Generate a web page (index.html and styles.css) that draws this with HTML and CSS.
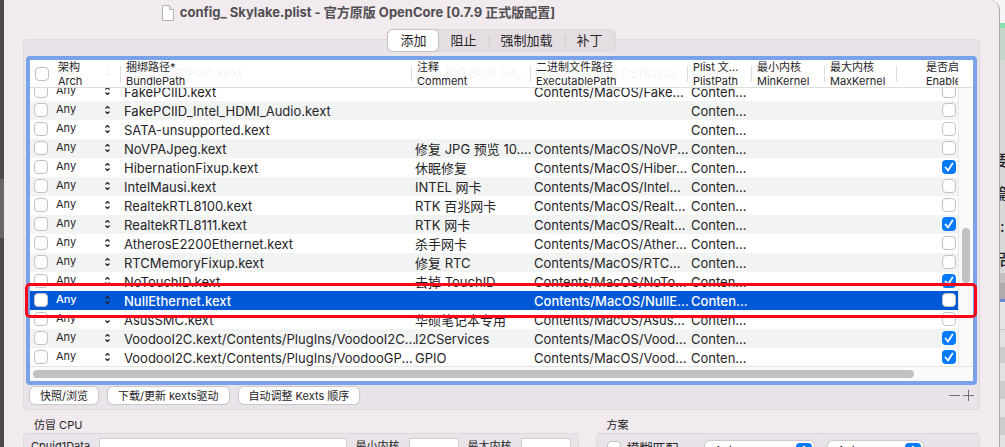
FILE: index.html
```
<!DOCTYPE html>
<html lang="zh-CN">
<head>
<meta charset="utf-8">
<title>config_ Skylake.plist</title>
<link rel="stylesheet" href="styles.css">
</head>
<body>
<div class="desktop">
  <div class="edge-left"></div>
  <main class="window">
    <header class="titlebar">
      <svg class="doc-icon" viewBox="0 0 12 16" width="12" height="16"><path d="M.5.5h7l4 4v11H.5z" fill="#fff" stroke="#b5b1b5"/><path d="M7.500.5v4h4" fill="#eee" stroke="#b5b1b5"/></svg>
      <h1>config_ Skylake.plist - 官方原版 OpenCore [0.7.9 正式版配置]</h1>
    </header>
    <section class="panel">
      <nav class="tabs">
        <button class="tab active">添加</button><button class="tab">阻止</button><button class="tab divided">强制加载</button><button class="tab divided">补丁</button>
      </nav>
      <div class="table-frame">
        <div class="scroller">
          <table class="kexts">
            <thead><tr>
              <th><input type="checkbox" aria-label="全选"></th>
              <th>架构<br>Arch</th><th>捆绑路径*<br>BundlePath</th><th>注释<br>Comment</th><th>二进制文件路径<br>ExecutablePath</th><th>Plist 文...<br>PlistPath</th><th>最小内核<br>MinKernel</th><th>最大内核<br>MaxKernel</th><th class="enabled">是否启<br>Enable</th>
            </tr></thead>
            <tbody id="rows"></tbody>
          </table>
          <div class="vtrack"><div class="vthumb"></div></div>
        </div>
        <div class="htrack"><div class="hthumb"></div></div>
        <div class="highlight"></div>
      </div>
      <div class="actions">
        <button class="push">快照/浏览</button><button class="push">下载/更新 kexts驱动</button><button class="push">自动调整 Kexts 顺序</button>
        <span class="spacer"></span>
        <button class="icon-button" aria-label="删除"><svg width="11" height="11" viewBox="0 0 11 11"><path d="M0 5.500h11" stroke="#716d72"/></svg></button>
        <button class="icon-button" aria-label="增加"><svg width="11" height="11" viewBox="0 0 11 11"><path d="M0 5.500h11M5.500 0v11" stroke="#716d72"/></svg></button>
      </div>
    </section>
    <div class="groups">
      <section class="group cpu">
        <h2>仿冒 CPU</h2>
        <div class="group-box">
          <label for="cpuid">Cpuid1Data</label><input class="grow" id="cpuid" type="text">
          <label for="min">最小内核</label><input class="short" id="min" type="text">
          <label for="max">最大内核</label><input class="short" id="max" type="text">
        </div>
      </section>
      <section class="group scheme">
        <h2>方案</h2>
        <div class="group-box">
          <input type="checkbox" id="fuzzy"><label for="fuzzy">模糊匹配</label>
          <span class="popup wide"><select aria-label="架构"><option>Auto</option></select><svg width="16" height="16" viewBox="0 0 16 16"><rect width="16" height="16" rx="4" fill="#067aff"/><path d="M5 6.500l3-3 3 3M5 9.500l3 3 3-3" fill="none" stroke="#fff" stroke-width="1.500"/></svg></span>
          <span class="popup"><select aria-label="缓存"><option>Auto</option></select><svg width="16" height="16" viewBox="0 0 16 16"><rect width="16" height="16" rx="4" fill="#067aff"/><path d="M5 6.500l3-3 3 3M5 9.500l3 3 3-3" fill="none" stroke="#fff" stroke-width="1.500"/></svg></span>
        </div>
      </section>
    </div>
  </main>
  <aside class="behind"><span>要</span><span>篇</span><span class="colon">:</span><span>品</span></aside>
</div>
<script src="rows.js"></script>
</body>
</html>
```
FILE: styles.css
```
* { box-sizing: border-box; }
body { margin: 0; height: 100vh; overflow: hidden; font: 13px/19px Inter, "Noto Sans CJK SC", sans-serif; color: #262427; background: #d6d6d6; }
button, input, select { font: inherit; color: inherit; margin: 0; }
.desktop { display: grid; grid-template-columns: 4px minmax(0, 1fr) 5px; height: 100vh; overflow: hidden; background: linear-gradient(#f5f5f5 23px, #86deaa 23px 28px, #c4d5ca 28px 60px, #d8d8d8 60px 273px, #c4bec0 273px 283px, #b0aaae 283px 299px, #6288d3 299px 302px, #e6e6e6 302px 329px, #c8c8c8 329px 330px, #e2e2e2 330px 347px, #cbcdcc 347px 363px, #e2e2e2 363px 381px, #cbcdcc 381px 399px, #e2e2e2 399px 417px, #cbcdcc 417px 435px, #e2e2e2 435px); }
.edge-left { background: linear-gradient(#4c484c 179px, #686467 179px 238px, #4c484c 238px); }
.window { background: #f1ebef; border-top-right-radius: 10px; border-right: 1px solid #aaa6aa; padding: 0 19px; min-width: 0; }
.titlebar { display: flex; justify-content: center; align-items: center; gap: 6px; height: 39px; padding: 0 286px 14px 0; }
h1 { margin: 0; font-size: 13px; line-height: 19px; font-weight: 700; color: #514d51; white-space: nowrap; }
.panel { border: 1px solid #dfd9de; border-radius: 4px; background: #e9e4e9; padding: 0 2px 5px; }
.tabs { display: flex; width: max-content; margin: -11px auto 4px; position: relative; background: #e4dee3; border: 1px solid #ddd7dc; border-radius: 6px; height: 23px; }
.tab { border: 0; background: none; padding: 0 12px; line-height: 21px; position: relative; }
.tab.active { background: #fff; border-radius: 5px; box-shadow: 0 0 1px 1px #c6c0c5; }
.tab.divided::before { content: ""; position: absolute; left: 0; top: 5px; height: 11px; width: 1px; background: #cdc7cc; }
.table-frame { position: relative; border: 4px solid #78a2ea; border-radius: 4px; background: #fafafa; }
.scroller { position: relative; display: grid; grid-template-columns: minmax(0, 1fr) 15px; height: 307px; overflow: hidden; border-bottom: 1px solid #e4e4e4; background: #fff; }
.kexts { display: block; padding-top: 3px; }
.kexts tr { display: grid; grid-template-columns: 24px 66px minmax(0, 1fr) 119px 157px 64px 73px 72px 62px; }
.kexts thead { position: absolute; top: 0; left: 0; right: 0; z-index: 1; background: rgba(255, 255, 255, .95); border-bottom: 1px solid #dddddd; height: 28px; display: block; padding-right: 15px; }
.kexts tbody { display: block; }
th { position: relative; padding: 0 0 0 6px; height: 27px; text-align: left; font-weight: 400; font-size: 11px; line-height: 14px; white-space: nowrap; }
th:nth-child(n+3)::before { content: ""; position: absolute; left: 0; top: 6px; height: 16px; width: 1px; background: #dddddd; }
th:first-child { padding: 7px 0 0 5px; }
th:nth-child(2) { padding-left: 4px; }
th.enabled { padding-left: 30px; overflow: hidden; }
td { padding: 0 0 0 4px; height: 19px; line-height: 21px; white-space: nowrap; }
td.arch { display: flex; justify-content: space-between; align-items: flex-start; padding: 0 10px 0 2px; font-size: 11px; line-height: 17px; }
td.arch svg { margin-top: 5px; color: #262427; }
td.enabled { padding: 2px 2px 0 0; text-align: right; line-height: 0; }
td.pick { padding-top: 2px; line-height: 0; }
tbody tr:nth-child(odd) { background: #f2f4f4; }
tbody tr.selected { background: #0058d6; color: #fff; font-weight: 500; }
input[type="checkbox"] { appearance: none; flex: none; width: 14px; height: 14px; border: 1px solid #c2c0c2; border-radius: 4px; background: #fff; display: inline-block; vertical-align: top; }
input[type="checkbox"]:checked { border: 0; background: #067aff url("data:image/svg+xml,%3Csvg xmlns='http://www.w3.org/2000/svg' viewBox='0 0 14 14'%3E%3Cpath d='M3.500 7.500l2.500 3 4.500-7' fill='none' stroke='white' stroke-width='1.800' stroke-linecap='round' stroke-linejoin='round'/%3E%3C/svg%3E"); }
.vtrack { background: #fafafa; border-left: 1px solid #e8e8e8; padding: 168px 3px 0; }
.vthumb { height: 55px; border-radius: 4px; background: #c1c1c1; }
.htrack { padding: 3px 59px 3px 3px; }
.hthumb { height: 8px; border-radius: 4px; background: #c1c1c1; }
.highlight { position: absolute; z-index: 2; left: -5px; right: -4px; top: 223px; height: 35px; border: 3px solid #fc0519; border-radius: 5px; }
.actions { display: flex; align-items: center; gap: 10px; padding: 2px 3px 0 4px; }
.push { border: 0; border-radius: 5px; background: #fff; box-shadow: 0 0 1px 1px #cbc5ca; height: 17px; padding: 0 10px; font-size: 11px; line-height: 16px; }
.spacer { flex: 1; }
.icon-button { border: 0; background: none; padding: 0; width: 11px; height: 11px; display: flex; }
.icon-button + .icon-button { margin-left: -7px; }
.groups { display: grid; grid-template-columns: minmax(0, 555fr) minmax(0, 384fr); gap: 17px; padding-top: 8px; }
h2 { margin: 0 0 0 11px; font-size: 11px; line-height: 15px; font-weight: 400; }
.group-box { display: flex; align-items: flex-start; border: 1px solid #dfd9de; border-radius: 4px; background: #e9e4e9; padding: 4px 7px; height: 60px; gap: 9px; }
.group-box label { font-size: 11px; line-height: 16px; white-space: nowrap; }
input[type="text"] { border: 1px solid #d2ccd1; background: #fff; height: 21px; padding: 0; min-width: 0; }
.grow { flex: 1; }
.short { width: 50px; }
.scheme .group-box { padding: 7px 10px; gap: 6px; }
.scheme label { font-size: 13px; line-height: 14px; }
.popup { position: relative; display: flex; width: 95px; margin-left: 8px; }
.popup.wide { width: 109px; margin-left: 20px; }
.popup select { appearance: none; border: 0; width: 100%; height: 19px; border-radius: 5px; padding: 0 10px; background: #fff; box-shadow: 0 0 1px 1px #cbc5ca; font-size: 11px; line-height: 17px; }
.popup svg { position: absolute; right: 2px; top: 2px; }
.behind { padding-top: 151px; overflow: hidden; font-size: 15px; font-weight: 500; }
.behind span { display: block; width: 15px; height: 33px; margin-left: -7px; }
.behind .colon { margin-left: 0; }
```
FILE: rows.js
```
const kexts = [
  ["CtlnaAHCIPort.kext", "修复 BIG SUR SA...", "Contents/MacOS/Ctlna...", 0],
  ["FakePCIID.kext", "", "Contents/MacOS/Fake...", 0],
  ["FakePCIID_Intel_HDMI_Audio.kext", "", "", 0],
  ["SATA-unsupported.kext", "", "", 0],
  ["NoVPAJpeg.kext", "修复 JPG 预览 10....", "Contents/MacOS/NoVP...", 0],
  ["HibernationFixup.kext", "休眠修复", "Contents/MacOS/Hiber...", 1],
  ["IntelMausi.kext", "INTEL 网卡", "Contents/MacOS/Intel...", 0],
  ["RealtekRTL8100.kext", "RTK 百兆网卡", "Contents/MacOS/Realt...", 0],
  ["RealtekRTL8111.kext", "RTK 网卡", "Contents/MacOS/Realt...", 1],
  ["AtherosE2200Ethernet.kext", "杀手网卡", "Contents/MacOS/Ather...", 0],
  ["RTCMemoryFixup.kext", "修复 RTC", "Contents/MacOS/RTC...", 0],
  ["NoTouchID.kext", "去掉 TouchID", "Contents/MacOS/NoTo...", 1],
  ["NullEthernet.kext", "", "Contents/MacOS/NullE...", 0, "selected"],
  ["AsusSMC.kext", "华硕笔记本专用", "Contents/MacOS/Asus...", 0],
  ["VoodooI2C.kext/Contents/PlugIns/VoodooI2C...", "I2CServices", "Contents/MacOS/Vood...", 1],
  ["VoodooI2C.kext/Contents/PlugIns/VoodooGP...", "GPIO", "Contents/MacOS/Vood...", 1]
];
const stepper = '<svg width="5" height="8" viewBox="0 0 5 8"><path d="M.5 2.500l2-2 2 2M.5 5.500l2 2 2-2" fill="none" stroke="currentColor" stroke-width="1.300"/></svg>';
document.getElementById("rows").innerHTML = kexts.map(([bundle, comment, exec, on, state]) => `
  <tr class="${state || ""}">
    <td class="pick"><input type="checkbox" aria-label="选择 ${bundle}"></td>
    <td class="arch">Any ${stepper}</td><td>${bundle}</td><td>${comment}</td><td>${exec}</td><td>Conten...</td><td></td><td></td>
    <td class="enabled"><input type="checkbox" aria-label="启用 ${bundle}" ${on ? "checked" : ""}></td>
  </tr>`).join("");
```
